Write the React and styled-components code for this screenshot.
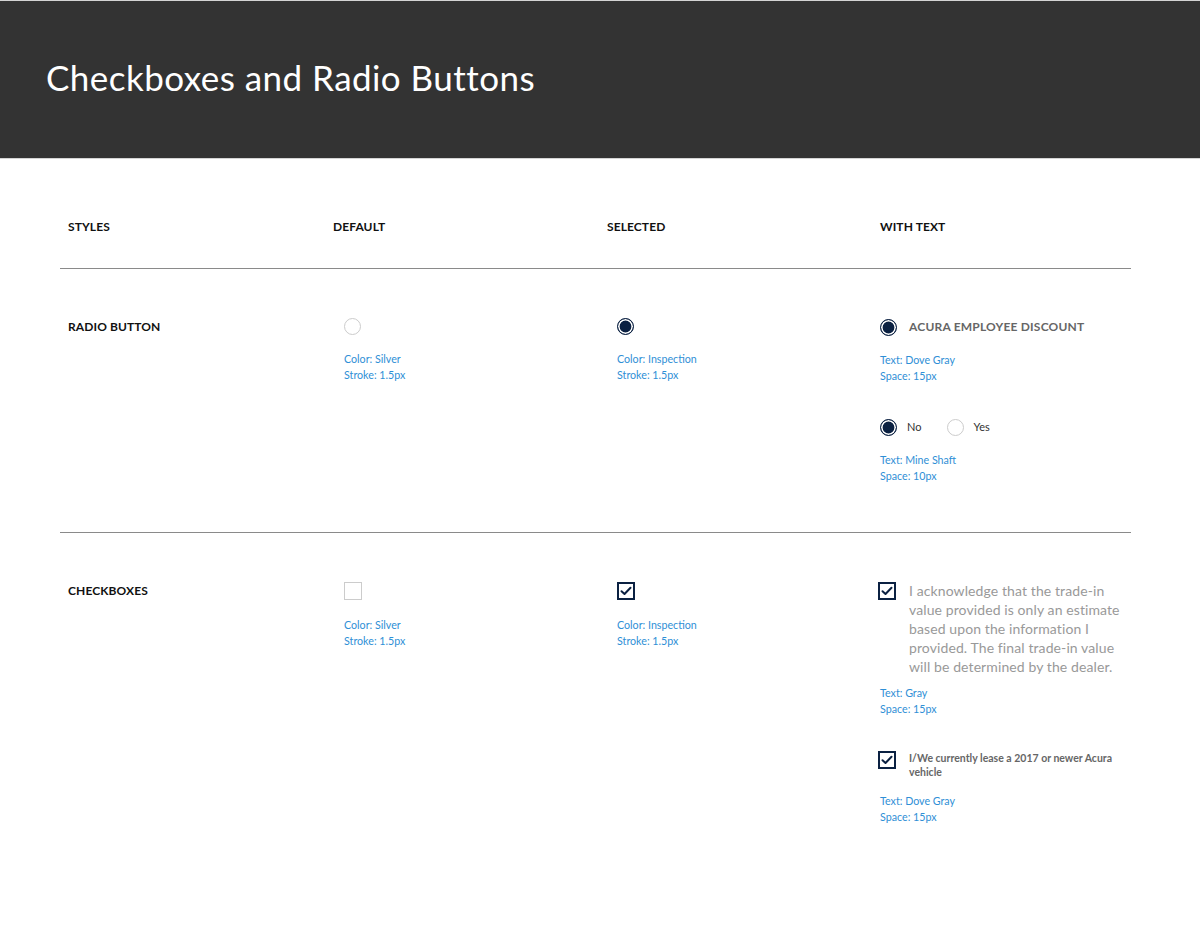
import React from "react";
import styled, { createGlobalStyle } from "styled-components";

const GlobalStyle = createGlobalStyle`
  html, body { margin: 0; padding: 0; background: #ffffff; }
  body { font-family: Lato, "Open Sans", sans-serif; -webkit-font-smoothing: antialiased; }
`;

const NAVY = "#0b2142";
const SILVER = "#cccccc";
const BLUE = "#2f8fd6";

const Page = styled.div`
  width: 1200px;
  min-height: 927px;
  background: #fff;
`;

const Header = styled.header`
  height: 157px;
  background: #333333;
  border-top: 1px solid #d4d4d4;
  border-bottom: 1px solid #d4d4d4;
  display: flex;
  align-items: center;
  padding-left: 46px;
  box-sizing: content-box;
`;

const Title = styled.h1`
  margin: 0 0 6px 0;
  color: #ffffff;
  font-family: Lato, sans-serif;
  font-weight: 400;
  font-size: 35px;
  letter-spacing: 0.45px;
`;

const Content = styled.main`
  margin: 0 69px 0 60px;
`;

const Row = styled.section`
  display: grid;
  grid-template-columns: 265px 274px 273px 1fr;
  padding: ${(p) => p.$pad || "48px 0 48px 8px"};
  border-bottom: ${(p) => (p.$line ? "1px solid #8a8a8a" : "none")};
  align-items: start;
`;

const HeadLabel = styled.div`
  font-family: Lato, sans-serif;
  font-weight: 700;
  font-size: 12px;
  line-height: 16px;
  color: #111;
  letter-spacing: 0.1px;
`;

const RowLabel = styled(HeadLabel)`
  line-height: 18px;
`;

const Cell = styled.div`
  display: flex;
  flex-direction: column;
  align-items: flex-start;
  padding-left: ${(p) => p.$inset || 0}px;
`;

const Caption = styled.div`
  margin-top: ${(p) => p.$mt ?? 16}px;
  font-family: Lato, sans-serif;
  font-size: 10.7px;
  line-height: 16px;
  color: ${BLUE};
`;

const Radio = styled.span`
  display: inline-block;
  flex: none;
  width: 17px;
  height: 17px;
  box-sizing: border-box;
  border-radius: 50%;
  border: 1.5px solid ${(p) => (p.$on ? NAVY : SILVER)};
  background: ${(p) => (p.$on ? NAVY : "#fff")};
  box-shadow: ${(p) => (p.$on ? "inset 0 0 0 1.6px #fff" : "none")};
`;

const Box = styled.span`
  display: inline-flex;
  align-items: center;
  justify-content: center;
  flex: none;
  width: 18px;
  height: 18px;
  box-sizing: border-box;
  border: ${(p) => (p.$on ? `2px solid ${NAVY}` : `1.5px solid ${SILVER}`)};
  background: #fff;
`;

const Option = styled.label`
  display: flex;
  align-items: ${(p) => (p.$top ? "flex-start" : "center")};
  gap: ${(p) => p.$gap || 12}px;
  margin-top: ${(p) => p.$mt || 0}px;
  margin-left: ${(p) => p.$ml || 0}px;
`;

const OptionGroup = styled.div`
  display: flex;
  align-items: center;
  gap: 26px;
  margin-top: ${(p) => p.$mt || 0}px;
`;

const StrongText = styled.span`
  font-family: Lato, sans-serif;
  font-weight: 700;
  font-size: 12px;
  line-height: 18px;
  color: #666666;
  letter-spacing: 0.2px;
`;

const PlainText = styled.span`
  font-family: Lato, sans-serif;
  font-size: 11px;
  line-height: 18px;
  color: #333333;
`;

const Para = styled.p`
  margin: -1.5px 0 0 0;
  width: 222px;
  font-family: Lato, sans-serif;
  font-size: 14px;
  line-height: 19px;
  color: #999999;
  letter-spacing: 0.1px;
`;

const SmallBold = styled.p`
  margin: 0;
  width: 230px;
  font-family: Lato, sans-serif;
  font-weight: 700;
  font-size: 10.5px;
  line-height: 14px;
  color: #666666;
`;

const Check = () => (
  <svg width="12" height="10" viewBox="0 0 12 10" aria-hidden="true">
    <path d="M1.5 5.2 L4.5 8 L10.5 1.8" fill="none" stroke={NAVY} strokeWidth="2" strokeLinecap="round" strokeLinejoin="round" />
  </svg>
);

const CheckBox = ({ on }) => <Box $on={on}>{on && <Check />}</Box>;

const Captions = ({ lines, mt }) => (
  <Caption $mt={mt}>
    {lines.map((l) => (
      <div key={l}>{l}</div>
    ))}
  </Caption>
);

export default function App() {
  return (
    <Page>
      <GlobalStyle />
      <Header>
        <Title>Checkboxes and Radio Buttons</Title>
      </Header>
      <Content>
        <Row $line $pad="60px 0 33px 8px">
          <HeadLabel>STYLES</HeadLabel>
          <HeadLabel>DEFAULT</HeadLabel>
          <HeadLabel>SELECTED</HeadLabel>
          <HeadLabel>WITH TEXT</HeadLabel>
        </Row>

        <Row $line $pad="49px 0 48px 8px">
          <RowLabel>RADIO BUTTON</RowLabel>
          <Cell $inset={11}>
            <Radio />
            <Captions mt={16} lines={["Color: Silver", "Stroke: 1.5px"]} />
          </Cell>
          <Cell $inset={10}>
            <Radio $on />
            <Captions mt={16} lines={["Color: Inspection", "Stroke: 1.5px"]} />
          </Cell>
          <Cell $inset={0}>
            <Option $gap={12}>
              <Radio $on />
              <StrongText>ACURA EMPLOYEE DISCOUNT</StrongText>
            </Option>
            <Captions lines={["Text: Dove Gray", "Space: 15px"]} />
            <OptionGroup $mt={34}>
              <Option $gap={10}>
                <Radio $on />
                <PlainText>No</PlainText>
              </Option>
              <Option $gap={9}>
                <Radio />
                <PlainText>Yes</PlainText>
              </Option>
            </OptionGroup>
            <Captions lines={["Text: Mine Shaft", "Space: 10px"]} />
          </Cell>
        </Row>

        <Row $pad="49px 0 48px 8px">
          <RowLabel>CHECKBOXES</RowLabel>
          <Cell $inset={11}>
            <CheckBox />
            <Captions mt={17} lines={["Color: Silver", "Stroke: 1.5px"]} />
          </Cell>
          <Cell $inset={10}>
            <CheckBox on />
            <Captions mt={17} lines={["Color: Inspection", "Stroke: 1.5px"]} />
          </Cell>
          <Cell $inset={0}>
            <Option $top $gap={13} $ml={-2}>
              <CheckBox on />
              <Para>
                I acknowledge that the trade-in value provided is only an estimate based upon the information I
                provided. The final trade-in value will be determined by the dealer.
              </Para>
            </Option>
            <Captions mt={9} lines={["Text: Gray", "Space: 15px"]} />
            <Option $top $gap={13} $mt={34} $ml={-2}>
              <CheckBox on />
              <SmallBold>I/We currently lease a 2017 or newer Acura vehicle</SmallBold>
            </Option>
            <Captions mt={14} lines={["Text: Dove Gray", "Space: 15px"]} />
          </Cell>
        </Row>
      </Content>
    </Page>
  );
}
